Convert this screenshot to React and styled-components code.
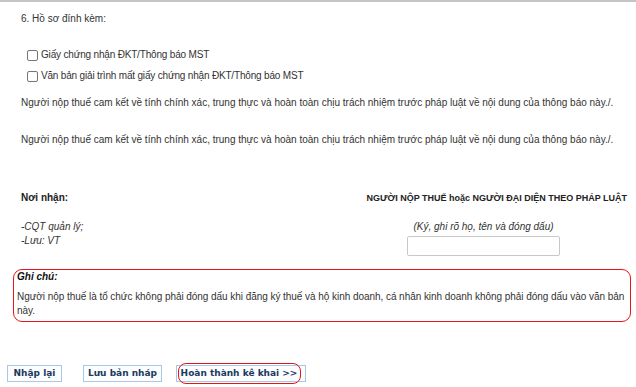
import React from "react";
import styled, { createGlobalStyle } from "styled-components";

const GlobalStyle = createGlobalStyle`
  html, body {
    margin: 0;
    padding: 0;
    background: #ffffff;
  }
  body {
    font-family: "Liberation Sans", Arial, sans-serif;
    font-size: 10px;
    color: #333333;
  }
`;

const Page = styled.div`
  width: 636px;
  height: 387px;
  box-sizing: border-box;
  border-top: 2px solid #c4c4c4;
  overflow: hidden;
`;

const Section = styled.div`
  padding: 0 21px;
`;

const Title = styled.div`
  margin-top: 10px;
  line-height: 14px;
`;

const CheckList = styled.div`
  margin-top: 22px;
  padding-left: 6px;
  display: flex;
  flex-direction: column;
  gap: 7px;
`;

const CheckRow = styled.label`
  display: flex;
  align-items: center;
  gap: 3px;
  line-height: 14px;
  letter-spacing: -0.18px;
`;

const Box = styled.span`
  width: 9px;
  height: 9px;
  border: 1px solid #767676;
  border-radius: 2px;
  background: #fff;
  flex-shrink: 0;
`;

const Commit = styled.p`
  margin: ${(p) => p.$top}px 0 0;
  line-height: 14px;
  white-space: nowrap;
`;

const SignTable = styled.div`
  margin-top: 44px;
  display: grid;
  grid-template-columns: 319px 287px;
`;

const LeftCol = styled.div`
  display: flex;
  flex-direction: column;
`;

const RightCol = styled.div`
  display: flex;
  flex-direction: column;
  align-items: center;
`;

const Bold = styled.div`
  font-weight: bold;
  font-size: ${(p) => p.$size || 9}px;
  line-height: 14px;
  color: #222;
  align-self: ${(p) => p.$align || "auto"};
  white-space: nowrap;
`;

const Italic = styled.div`
  font-style: italic;
  line-height: 14px;
  margin-top: ${(p) => p.$top || 0}px;
`;

const SignInput = styled.div`
  width: 151px;
  height: 18px;
  margin-top: 2px;
  border: 1px solid #c8c8c8;
  border-radius: 2px;
  background: #fff;
`;

const Note = styled.div`
  margin: 13px 5px 0 13px;
  border: 1.5px solid #e8141b;
  border-radius: 9px;
  padding: 1px 2px 3px 3px;
`;

const NoteTitle = styled.div`
  font-weight: bold;
  font-style: italic;
  color: #111;
  line-height: 12px;
`;

const NoteText = styled.div`
  margin-top: 7px;
  line-height: 14px;
  letter-spacing: -0.05px;
`;

const Actions = styled.div`
  margin-top: 43px;
  padding-left: 7px;
  display: flex;
  align-items: center;
`;

const Button = styled.button`
  position: relative;
  width: ${(p) => p.$w}px;
  margin-left: ${(p) => p.$gap || 0}px;
  height: 17px;
  padding: 0;
  border: 1px solid #a9c8e6;
  background: #fbfdff;
  color: #1b3a5c;
  font-family: "DejaVu Sans", Verdana, sans-serif;
  font-weight: bold;
  font-size: 9px;
  line-height: 15px;
  text-align: center;
  cursor: pointer;

  ${(p) =>
    p.$marked &&
    `
    padding-right: 4px;
    &::after {
      content: "";
      position: absolute;
      left: 1px;
      right: 4px;
      top: -3px;
      bottom: -3px;
      border: 1.5px solid #e8141b;
      border-radius: 8px;
      pointer-events: none;
    }
  `}
`;

const commitText =
  "Người nộp thuế cam kết về tính chính xác, trung thực và hoàn toàn chịu trách nhiệm trước pháp luật về nội dung của thông báo này./.";

export default function App() {
  return (
    <>
      <GlobalStyle />
      <Page>
        <Section>
          <Title>6. Hồ sơ đính kèm:</Title>
          <CheckList>
            <CheckRow>
              <Box />
              Giấy chứng nhận ĐKT/Thông báo MST
            </CheckRow>
            <CheckRow>
              <Box />
              Văn bản giải trình mất giấy chứng nhận ĐKT/Thông báo MST
            </CheckRow>
          </CheckList>
          <Commit $top={13}>{commitText}</Commit>
          <Commit $top={23}>{commitText}</Commit>
          <SignTable>
            <LeftCol>
              <Bold $size={10}>Nơi nhận:</Bold>
              <Italic $top={15}>-CQT quản lý;</Italic>
              <Italic>-Lưu: VT</Italic>
            </LeftCol>
            <RightCol>
              <Bold $align="flex-end">NGƯỜI NỘP THUẾ hoặc NGƯỜI ĐẠI DIỆN THEO PHÁP LUẬT</Bold>
              <Italic $top={15}>(Ký, ghi rõ họ, tên và đóng dấu)</Italic>
              <SignInput />
            </RightCol>
          </SignTable>
        </Section>
        <Note>
          <NoteTitle>Ghi chú:</NoteTitle>
          <NoteText>
            Người nộp thuế là tổ chức không phải đóng dấu khi đăng ký thuế và hộ kinh doanh, cá nhân kinh doanh không phải đóng dấu vào văn bản này.
          </NoteText>
        </Note>
        <Actions>
          <Button $w={55}>Nhập lại</Button>
          <Button $w={79} $gap={21}>Lưu bản nháp</Button>
          <Button $w={130} $gap={14} $marked>
            Hoàn thành kê khai &gt;&gt;
          </Button>
        </Actions>
      </Page>
    </>
  );
}
